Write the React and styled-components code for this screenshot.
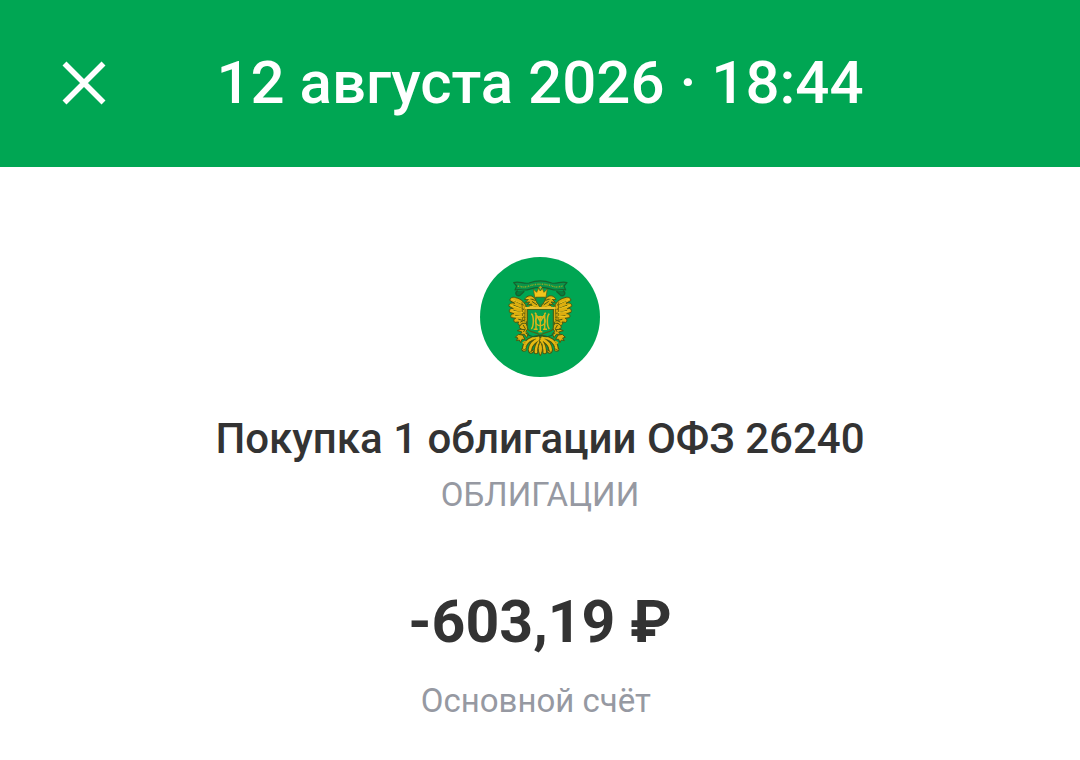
import styled, { createGlobalStyle } from 'styled-components';

const GlobalStyle = createGlobalStyle`
  * {
    box-sizing: border-box;
  }
  body {
    margin: 0;
    background: #ffffff;
    font-family: Roboto, 'Liberation Sans', sans-serif;
  }
`;

const Header = styled.header`
  display: grid;
  grid-template-columns: 48px 1fr 48px;
  align-items: center;
  padding: 47px 60px 48px;
  background: #00a653;
  color: #ffffff;
`;

const CloseButton = styled.button`
  display: flex;
  padding: 0;
  border: none;
  background: none;
  color: inherit;
  cursor: pointer;
`;

const Title = styled.h1`
  margin: 0;
  font-size: 60px;
  font-weight: 500;
  line-height: 72px;
  text-align: center;
`;

const Operation = styled.main`
  display: flex;
  flex-direction: column;
  align-items: center;
  padding: 90px 24px 40px;
  color: #333333;
  text-align: center;
`;

const Avatar = styled.div`
  width: 120px;
  height: 120px;
  overflow: hidden;
  border-radius: 50%;
  background: #00a653;
`;

const Name = styled.h2`
  margin: 36px 0 0;
  font-size: 42px;
  font-weight: 500;
  line-height: 52px;
`;

const Caption = styled.p`
  margin: ${({ $gap }) => $gap}px 0 0;
  color: #9699a2;
  font-size: 33px;
  line-height: 40px;
`;

const Amount = styled.p`
  margin: 71px 0 0;
  font-size: 59px;
  font-weight: 700;
  line-height: 72px;
`;

const CloseIcon = () => (
  <svg width='48' height='48' viewBox='0 0 48 48' fill='none' aria-hidden='true'>
    <path d='M4.5 4.5 43.5 43.5M43.5 4.5 4.5 43.5' stroke='currentColor' strokeWidth='5.6' />
  </svg>
);

// left half of the eagle, the right one is its mirror
const EagleHalf = () => (
  <g stroke='#4c5711' strokeWidth='3' strokeLinejoin='round' strokeLinecap='round'>
    <g fill='#dcae0f'>
      <path d='M157 175C150 158 140 147 122 143C112 139 103 145 105 152L119 160C108 156 100 162 102 169L115 176C105 173 101 180 104 187L117 191C108 191 105 198 109 203L122 205C115 207 115 214 120 217L131 216C127 221 130 226 136 226L143 219L151 224L157 212Z' />
      <path d='M194 181V170C188 162 184 147 174 140C165 134 152 139 149 149L160 148L151 157L164 156L156 165L170 162L158 174V181Z' />
      <path d='M152 220C143 218 134 224 133 233L139 237L127 242L141 246L136 253L148 253L155 263L160 251L153 244L159 235Z' />
      <path d='M142 255L130 253L121 262L129 264L124 272L133 270L137 278L141 268L149 268Z' />
    </g>
    <g fill='none' strokeWidth='3'>
      <path d='M118 152L145 165M116 166L146 178M117 182L149 190M122 197L150 202M131 208L150 213M137 216L150 209' />
      <path d='M141 158L143 213M151 166L149 207' stroke='#776d0e' />
      <path d='M166 146L180 151M172 155L185 164M169 167L182 172M181 147L188 161' />
      <path d='M145 226L151 236L146 245M138 238L150 239' />
    </g>
    <path d='M110 148L138 160M108 166L139 176M110 183L143 188M116 199L143 200M155 146L169 144M160 172L180 168' fill='none' stroke='#f0c81e' />
    {/* tail plumes: a dark edge under a gold core */}
    <g fill='none'>
      <path d='M189 262C168 264 151 275 148 293M192 267C174 275 166 286 165 299M194 273C186 284 183 292 183 306' strokeWidth='14' />
      <path d='M148 293C140 297 142 303 151 300M165 299C160 306 169 311 174 303' strokeWidth='8' />
      <path d='M189 262C168 264 151 275 148 293M192 267C174 275 166 286 165 299M194 273C186 284 183 292 183 306' stroke='#e5b912' strokeWidth='8' />
      <path d='M148 293C140 297 142 303 151 300M165 299C160 306 169 311 174 303' stroke='#e5b912' strokeWidth='3' />
      <path d='M182 267C167 271 158 279 153 290M187 275C178 282 173 289 171 299M191 282L188 303' strokeWidth='2' />
      <path d='M151 274L144 278L151 283' stroke='#d1a90f' strokeWidth='4' />
    </g>
  </g>
);

const MinfinEmblem = () => (
  <svg width='120' height='120' viewBox='15 21 360 360' role='img' aria-label='Минфин России'>
    <path
      d='M128 122C118 128 123 139 134 137L148 124M264 122C274 128 269 139 258 137L244 124'
      fill='#087d3c'
      stroke='#17612d'
      strokeWidth='4'
    />
    <path
      d='M116 98C133 92 145 103 162 99C184 91 208 91 230 99C247 103 259 92 276 98L267 108L272 120C258 115 247 124 230 118C207 110 185 110 162 118C145 124 134 115 120 120L125 108Z'
      fill='#08944a'
      stroke='#17612d'
      strokeWidth='3.5'
      strokeLinejoin='round'
    />
    <path
      d='M128 108C145 112 153 112 164 107C185 101 207 101 228 107C239 112 247 112 264 108'
      fill='none'
      stroke='#8fa824'
      strokeWidth='4.5'
      strokeDasharray='4 2.5 2 2'
    />
    <EagleHalf />
    <g transform='translate(392 0) scale(-1 1)'>
      <EagleHalf />
    </g>
    <path
      d='M179 142L175 117L185 127L190 115L196 123L202 115L207 127L217 117L213 142Z'
      fill='#f2c51b'
      stroke='#5f6414'
      strokeWidth='2.5'
      strokeLinejoin='round'
    />
    <path d='M196 108V118M191 112H201' stroke='#c6a91a' strokeWidth='3' />
    <path d='M183 142H209V152Q206 162 196 165Q186 162 183 152Z' fill='#08994b' stroke='#55651a' strokeWidth='2' />
    <path
      d='M157 178H235V232C235 242 226 245 215 247C206 249 200 252 196 257C192 252 186 249 177 247C166 245 157 242 157 232Z'
      fill='#06a04c'
      stroke='#4c6216'
      strokeWidth='3.5'
    />
    <path d='M150 174H242' stroke='#ecc333' strokeWidth='6' />
    <g fill='none' stroke='#d6b51a' strokeWidth='4.5'>
      <path d='M169 191C177 198 177 228 169 237M223 191C215 198 215 228 223 237' />
      <ellipse cx='196' cy='213' rx='15' ry='14' strokeWidth='3.5' />
      <path d='M183 190V237M209 190V237M180 188L196 215L212 188M187 201H205M196 201V245M176 238H188M204 238H216M190 245H202' />
    </g>
    <path
      d='M152 248C166 263 180 261 196 256C212 261 226 263 240 248'
      fill='none'
      stroke='#195f2b'
      strokeWidth='3.5'
    />
    <path
      d='M196 275C188 289 187 301 196 317C205 301 204 289 196 275Z'
      fill='#e0b412'
      stroke='#4c5711'
      strokeWidth='3'
      strokeLinejoin='round'
    />
  </svg>
);

const App = () => {
  return (
    <>
      <GlobalStyle />
      <Header>
        <CloseButton type='button' aria-label='Закрыть'>
          <CloseIcon />
        </CloseButton>
        <Title>12 августа 2026 · 18:44</Title>
      </Header>
      <Operation>
        <Avatar>
          <MinfinEmblem />
        </Avatar>
        <Name>Покупка 1 облигации ОФЗ 26240</Name>
        <Caption $gap={10}>ОБЛИГАЦИИ</Caption>
        <Amount>-603,19 ₽</Amount>
        <Caption $gap={23}>Основной счёт&nbsp;</Caption>
      </Operation>
    </>
  );
};

export default App;
